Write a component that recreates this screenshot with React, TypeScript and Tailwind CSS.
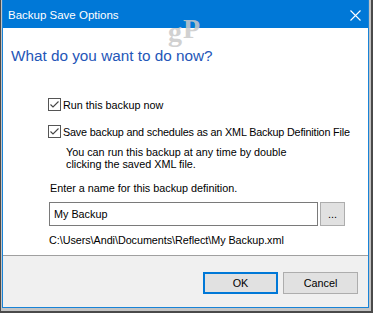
import React from "react";

const font = { fontFamily: '"Liberation Sans", Arial, sans-serif' };

function Check() {
  return (
    <div className="w-[13px] h-[13px] border border-[#555555] bg-white flex-none flex items-center justify-center">
      <svg width="11" height="11" viewBox="0 0 11 11">
        <path d="M1.5 5.5 L4 8 L9.5 2.5" fill="none" stroke="#444444" strokeWidth="1.1" />
      </svg>
    </div>
  );
}

export default function App() {
  return (
    <div
      className="w-[373px] h-[313px] bg-[#c4c4c4] border-l border-r-2 border-b-2 border-[#4a4a4a] pl-[1px] pr-[2px] pb-[3px] flex"
      style={font}
    >
      <div className="relative flex-1 flex flex-col border-l border-r border-b border-[#1883d7] bg-white">
        {/* Title bar */}
        <div className="h-[28px] bg-[#0078d7] flex items-start justify-between pl-[5px] pr-[7px] pt-[8px] flex-none">
          <span className="text-white text-[11.5px] leading-[14px]">Backup Save Options</span>
          <svg width="11" height="11" viewBox="0 0 11 11" className="mt-[2px]">
            <path d="M0.5 0.5 L10.5 10.5 M10.5 0.5 L0.5 10.5" stroke="white" strokeWidth="1.1" />
          </svg>
        </div>

        {/* Watermark */}
        <div
          className="absolute left-[165px] top-[15px] text-[28px] font-bold leading-[28px] text-[#c9c9c9] pointer-events-none select-none flex tracking-[1px]"
          style={{ fontFamily: '"Liberation Serif", "Times New Roman", serif', opacity: 0.85 }}
        >
          <span className="relative top-[3px]">g</span>
          <span>P</span>
        </div>

        {/* Content */}
        <div className="flex-1 flex flex-col">
          <div className="mt-[18px] pl-[8px] text-[15.3px] leading-[20px] text-[#2456b8]">
            What do you want to do now?
          </div>

          <div className="mt-[32px] pl-[45px] flex items-start gap-[2px] text-[10.8px] leading-[13px] text-black">
            <Check />
            <span className="mt-[1px]">Run this backup now</span>
          </div>

          <div className="mt-[13px] pl-[45px] flex items-start gap-[2px] text-[10.8px] leading-[13px] text-black">
            <Check />
            <span className="mt-[1px] tracking-[-0.17px]">Save backup and schedules as an XML Backup Definition File</span>
          </div>

          <div className="mt-[7px] pl-[63px] text-[10.8px] leading-[12px] text-black">
            <div>You can run this backup at any time by double</div>
            <div>clicking the saved XML file.</div>
          </div>

          <div className="mt-[12px] pl-[47px] text-[10.8px] leading-[13px] text-black">
            Enter a name for this backup definition.
          </div>

          <div className="mt-[7px] pl-[46px] flex gap-[2px]">
            <div className="w-[269px] h-[24px] border border-[#7a7a7a] bg-white flex items-center pl-[4px] text-[10.8px] leading-[13px] text-black">
              My Backup
            </div>
            <div className="w-[25px] h-[24px] border border-[#adadad] bg-[#e1e1e1] flex items-center justify-center text-[10.8px] leading-[13px] text-black">
              ...
            </div>
          </div>

          <div className="mt-[8px] pl-[46px] text-[10.8px] leading-[13px] text-black tracking-[-0.05px]">
            {"C:\\Users\\Andi\\Documents\\Reflect\\My Backup.xml"}
          </div>
        </div>

        {/* Bottom panel */}
        <div className="h-[52px] flex-none border-t border-[#a0a0a0] bg-[#f0f0f0] flex justify-end items-start pt-[16px] pr-[10px] gap-[5px]">
          <div className="w-[75px] h-[22px] border-2 border-[#0078d7] bg-[#e1e1e1] flex items-center justify-center text-[10.8px] leading-[13px] text-black">
            OK
          </div>
          <div className="w-[75px] h-[22px] border border-[#adadad] bg-[#e1e1e1] flex items-center justify-center text-[10.8px] leading-[13px] text-black">
            Cancel
          </div>
        </div>
      </div>
    </div>
  );
}
